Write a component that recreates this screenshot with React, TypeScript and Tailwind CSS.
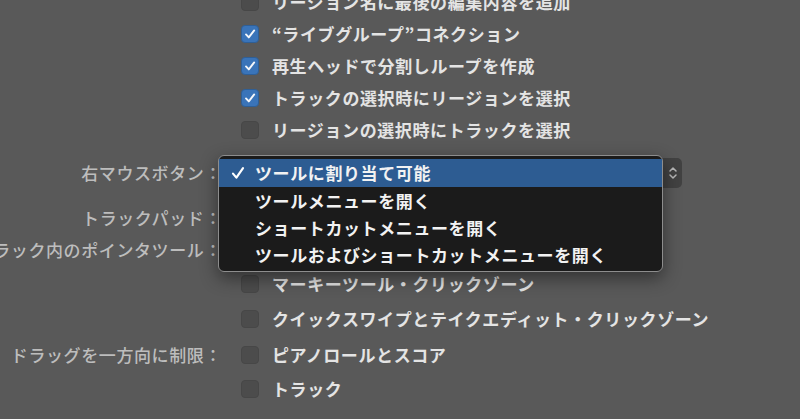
import React from 'react';

type CheckProps = { checked?: boolean };

const Checkbox: React.FC<CheckProps> = ({ checked = false }) => (
  <span
    className={`flex h-[18px] w-[18px] shrink-0 items-center justify-center rounded-[4px] border ${
      checked ? 'border-[#2f5f96] bg-[#3a74b9]' : 'border-[#474747] bg-[#4c4c4c]'
    }`}
  >
    {checked && (
      <svg width="12" height="12" viewBox="0 0 12 12" fill="none">
        <path d="M2 6.4 L4.8 9.4 L10.2 2.4" stroke="#f4f7fb" strokeWidth="1.9" strokeLinecap="round" strokeLinejoin="round" />
      </svg>
    )}
  </span>
);

// one line of the preferences grid: label column on the left, control on the right
const Row: React.FC<{ label?: string; h: string; children?: React.ReactNode }> = ({ label, h, children }) => (
  <div className={`grid grid-cols-[222px_1fr] items-center ${h}`}>
    <div className="flex justify-end whitespace-nowrap text-[#bdbdbd]">{label}</div>
    <div className="flex items-center">{children}</div>
  </div>
);

const CheckRow: React.FC<{ label?: string; h?: string; text: string; checked?: boolean }> = ({ label, h = 'h-[32px]', text, checked }) => (
  <Row label={label} h={h}>
    <div className="ml-[19px] flex items-center gap-[13px] whitespace-nowrap font-semibold text-[#e4e4e4]">
      <Checkbox checked={checked} />
      <span>{text}</span>
    </div>
  </Row>
);

const menuItems = [
  'ツールに割り当て可能',
  'ツールメニューを開く',
  'ショートカットメニューを開く',
  'ツールおよびショートカットメニューを開く',
];

export default function App() {
  return (
    <div className="relative h-[419px] w-[800px] overflow-hidden bg-[#595959] font-['Noto_Sans_CJK_JP','Noto_Sans',sans-serif] text-[17px] font-medium tracking-[0.6px]">
      <div className="-mt-[14px] flex flex-col">
        <CheckRow text="リージョン名に最後の編集内容を追加" />
        <CheckRow text="“ライブグループ”コネクション" checked />
        <CheckRow text="再生ヘッドで分割しループを作成" checked />
        <CheckRow text="トラックの選択時にリージョンを選択" checked />
        <CheckRow text="リージョンの選択時にトラックを選択" />

        <Row label="右マウスボタン：" h="h-[54px]">
          <div className="ml-[16px] flex h-[30px] w-[444px] justify-end rounded-[5px] bg-[#424242]">
            <span className="flex w-[19px] items-center justify-center">
              <svg width="10" height="16" viewBox="0 0 10 16" fill="none" stroke="#b9b9b9" strokeWidth="1.5" strokeLinecap="round" strokeLinejoin="round">
                <path d="M2 6 L5 3 L8 6" />
                <path d="M2 10 L5 13 L8 10" />
              </svg>
            </span>
          </div>
        </Row>
        <Row label="トラックパッド：" h="h-[36px]" />
        <Row label="トラック内のポインタツール：" h="h-[28px]" />

        <CheckRow text="マーキーツール・クリックゾーン" h="h-[40px]" />
        <CheckRow text="クイックスワイプとテイクエディット・クリックゾーン" h="h-[30px]" />
        <CheckRow label="ドラッグを一方向に制限：" text="ピアノロールとスコア" h="h-[42px]" />
        <CheckRow text="トラック" h="h-[24px]" />

        <Row h="h-[46px]">
          <div className="ml-[16px] mt-[32px] h-[30px] w-[444px] rounded-[5px] bg-[#3d3d3d]" />
        </Row>
      </div>

      {/* open pop-up menu for the right mouse button */}
      <div className="absolute left-[218px] top-[155px] w-[445px] rounded-[6px] border border-[#8d8d8d] bg-[#1b1b1b] py-[3px] font-semibold text-[#f2f2f2] shadow-[0_6px_18px_rgba(0,0,0,0.45)]">
        {menuItems.map((item, i) => (
          <div
            key={item}
            className={`flex items-center whitespace-nowrap ${i === 0 ? 'h-[28px] bg-[#2d5c92]' : 'h-[27px]'}`}
          >
            <span className="flex w-[36px] justify-center pl-[2px]">
              {i === 0 && (
                <svg width="14" height="14" viewBox="0 0 14 14" fill="none">
                  <path d="M2 7.6 L5.4 11.6 L12 2.2" stroke="#ffffff" strokeWidth="2.2" strokeLinecap="round" strokeLinejoin="round" />
                </svg>
              )}
            </span>
            <span>{item}</span>
          </div>
        ))}
      </div>
    </div>
  );
}
